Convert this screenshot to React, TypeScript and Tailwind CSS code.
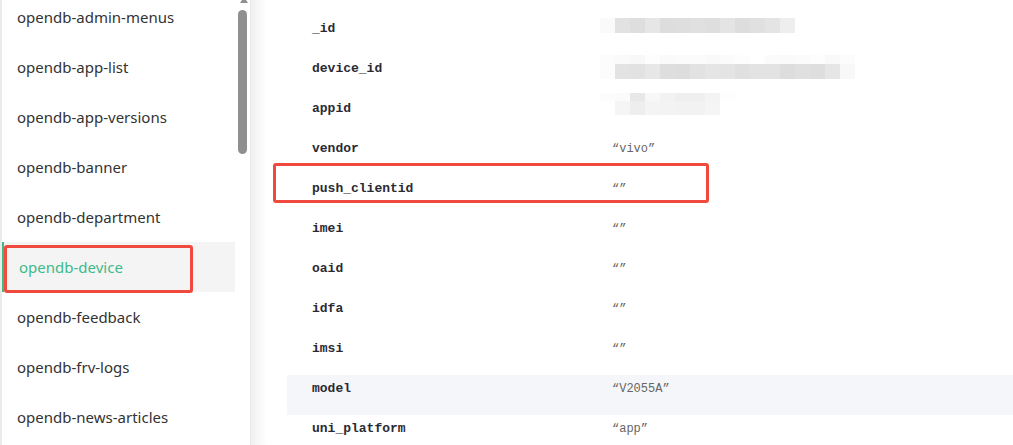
import React from 'react';

const collections = [
  'opendb-admin-menus',
  'opendb-app-list',
  'opendb-app-versions',
  'opendb-banner',
  'opendb-department',
  'opendb-device',
  'opendb-feedback',
  'opendb-frv-logs',
  'opendb-news-articles',
];

// pixelated (masked) values, one class per 15px block
const maskId = [
  ['bg-[#fafafa]', 'bg-[#e2e2e2]', 'bg-[#dedede]', 'bg-[#e6e6e6]', 'bg-[#dddddd]', 'bg-[#dedede]', 'bg-[#e0e0e0]', 'bg-[#dedede]', 'bg-[#e4e4e4]', 'bg-[#dddddd]', 'bg-[#e0e0e0]', 'bg-[#e4e4e4]', 'bg-[#eeeeee]'],
];
const maskDevice = [
  ['bg-[#fcfcfc]', 'bg-[#fafafa]', 'bg-[#f8f8f8]', 'bg-[#fdfdfd]', 'bg-[#fafafa]', 'bg-[#fbfbfb]', 'bg-[#fbfbfb]', 'bg-[#f9f9f9]', 'bg-[#fbfbfb]', 'bg-[#fdfdfd]', 'bg-white', 'bg-[#fbfbfb]', 'bg-[#fafafa]', 'bg-[#fbfbfb]', 'bg-[#fdfdfd]', 'bg-[#f9f9f9]', 'bg-[#fcfcfc]'],
  ['bg-[#fcfcfc]', 'bg-[#e3e3e3]', 'bg-[#e2e2e2]', 'bg-[#e7e7e7]', 'bg-[#dedede]', 'bg-[#dddddd]', 'bg-[#e2e2e2]', 'bg-[#e5e5e5]', 'bg-[#e4e4e4]', 'bg-[#e0e0e0]', 'bg-[#e3e3e3]', 'bg-[#e3e3e3]', 'bg-[#dddddd]', 'bg-[#e0e0e0]', 'bg-[#dedede]', 'bg-[#e6e6e6]', 'bg-[#f8f8f8]'],
];
const maskAppid = [
  ['bg-[#fcfcfc]', 'bg-[#fbfbfb]', 'bg-[#e8e8e8]', 'bg-[#f7f7f7]', 'bg-[#f2f2f2]', 'bg-[#efefef]', 'bg-[#efefef]', 'bg-[#f3f3f3]', 'bg-[#fdfdfd]'],
  ['bg-white', 'bg-[#f5f5f5]', 'bg-[#eeeeee]', 'bg-[#f4f4f4]', 'bg-[#f3f3f3]', 'bg-[#f2f2f2]', 'bg-[#f2f2f2]', 'bg-[#f5f5f5]', 'bg-white'],
];

type Field = { key: string; value?: string; mask?: string[][]; maskRowHeights?: string[] };

const fields: Field[] = [
  { key: '_id', mask: maskId, maskRowHeights: ['h-[15px]'] },
  { key: 'device_id', mask: maskDevice, maskRowHeights: ['h-[9px]', 'h-[15px]'] },
  { key: 'appid', mask: maskAppid, maskRowHeights: ['h-[8px]', 'h-[14px]'] },
  { key: 'vendor', value: '“vivo”' },
  { key: 'push_clientid', value: '“”' },
  { key: 'imei', value: '“”' },
  { key: 'oaid', value: '“”' },
  { key: 'idfa', value: '“”' },
  { key: 'imsi', value: '“”' },
  { key: 'model', value: '“V2055A”' },
  { key: 'uni_platform', value: '“app”' },
];

function Mask({ rows, heights }: { rows: string[][]; heights: string[] }) {
  return (
    <div className="flex flex-col">
      {rows.map((row, i) => (
        <div key={i} className={`flex ${heights[i]}`}>
          {row.map((cls, j) => (
            <div key={j} className={`w-[15px] h-full ${cls}`} />
          ))}
        </div>
      ))}
    </div>
  );
}

export default function App() {
  return (
    <div className="relative flex h-[445px] w-[1013px] overflow-hidden bg-white">
      {/* collection list */}
      <div className="flex h-full w-[251px] shrink-0 border-l-2 border-r border-[#ebebeb]">
        <div className="-mt-[8px] flex w-[233px] flex-col font-['Noto_Sans',sans-serif] text-[15px] text-[#333]">
          {collections.map((name) => {
            const active = name === 'opendb-device';
            return (
              <div
                key={name}
                className={`flex h-[50px] shrink-0 items-center ${
                  active ? 'border-l-2 border-[#41b883] bg-[#f4f4f4] pl-[15px] text-[#3dba8a]' : 'pl-[15px]'
                }`}
              >
                {name}
              </div>
            );
          })}
        </div>
        <div className="relative w-[15px] shrink-0">
          <div className="absolute left-[5px] top-[-3px] h-0 w-0 border-x-[4px] border-b-[6px] border-x-transparent border-b-[#8f8f8f]" />
          <div className="absolute left-[3px] top-[10px] h-[144px] w-[9px] rounded-full bg-[#8f8f8f]" />
        </div>
      </div>
      <div className="w-[16px] shrink-0 bg-gradient-to-r from-[#f0f0f0] to-white" />

      {/* record detail */}
      <div className="flex flex-1 flex-col pl-[20px] pt-[15px]">
        {fields.map((f) => (
          <div
            key={f.key}
            className={`flex h-[40px] shrink-0 items-start pt-[6px] ${f.key === 'model' ? 'bg-[#f5f6f9]' : ''}`}
          >
            <div className="w-[325px] shrink-0 pl-[25px] font-['Liberation_Mono',monospace] text-[13px] font-bold leading-[16px] text-[#2a2a35]">
              {f.key}
            </div>
            {f.mask ? (
              <div className={f.key === '_id' ? '-mt-[3px] -ml-[12px]' : f.key === 'device_id' ? '-mt-[6px] -ml-[12px]' : '-ml-[12px] -mt-[8px]'}>
                <Mask rows={f.mask} heights={f.maskRowHeights!} />
              </div>
            ) : (
              <div className="font-['Liberation_Mono',monospace] text-[12px] leading-[16px] text-[#666]">{f.value}</div>
            )}
          </div>
        ))}
      </div>

      {/* highlight boxes */}
      <div className="absolute left-[4px] top-[245px] h-[48px] w-[189px] rounded-[3px] border-[3px] border-[#ef4a3d]" />
      <div className="absolute left-[273px] top-[163px] h-[40px] w-[436px] rounded-[3px] border-[3px] border-[#ef4a3d]" />
    </div>
  );
}
